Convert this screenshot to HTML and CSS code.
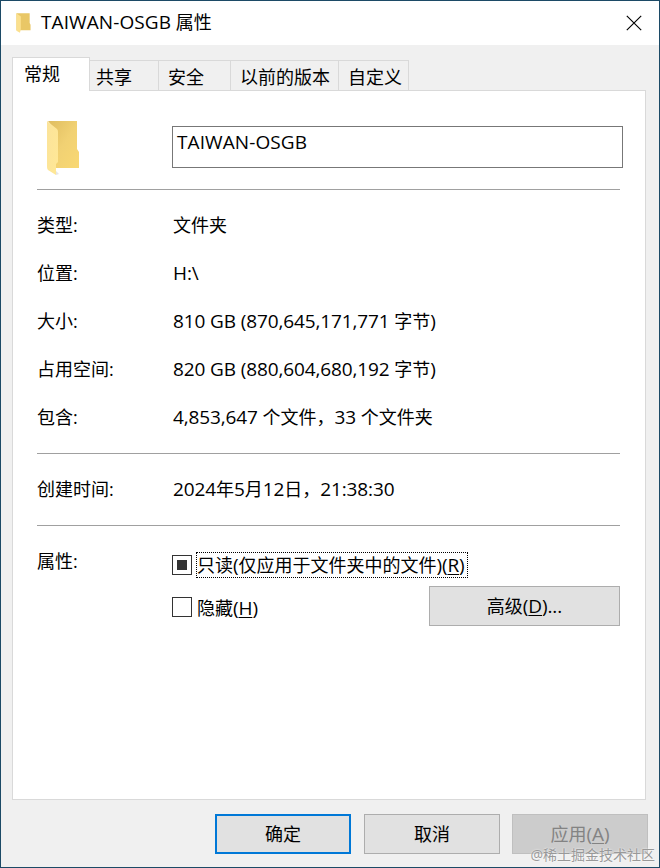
FILE: index.html
```html
<!DOCTYPE html>
<html lang="zh-CN">
<head>
<meta charset="utf-8">
<title>TAIWAN-OSGB 属性</title>
<link rel="stylesheet" href="styles.css">
</head>
<body>
<div class="window">
  <header class="titlebar">
    <svg class="title-icon" viewBox="0 0 34 56" preserveAspectRatio="none">
      <path fill="#e9c766" d="M1 1H31V28L33 33V48H1Z"/>
      <path fill="#fbe08e" d="M1 1L11 10V45L9 55L1 50Z"/>
    </svg>
    <h1 class="title"><span class="latin title-latin">TAIWAN-OSGB</span> 属性</h1>
    <svg class="close" viewBox="0 0 16 16"><path d="M.8 .8L15.2 15.2M15.2 .8L.8 15.2" stroke="#000" stroke-width="1.15"/></svg>
  </header>

  <nav class="tabs">
    <div class="tab active">常规</div>
    <div class="tab share">共享</div>
    <div class="tab security">安全</div>
    <div class="tab versions">以前的版本</div>
    <div class="tab custom">自定义</div>
  </nav>

  <main class="panel">
    <section class="head">
      <svg class="folder" viewBox="0 0 34 56">
        <defs>
          <linearGradient id="back" x1="0" y1="0" x2="1" y2="1">
            <stop offset="0" stop-color="#dfbd60"/><stop offset=".5" stop-color="#f1d173"/><stop offset="1" stop-color="#f9d873"/>
          </linearGradient>
          <linearGradient id="flap" x1="0" y1="0" x2="1" y2="1">
            <stop offset="0" stop-color="#fbe39a"/><stop offset="1" stop-color="#ffe896"/>
          </linearGradient>
        </defs>
        <path fill="url(#back)" d="M2 1H31V29L33 32V48H9V10Z"/>
        <path fill="#e6e6e6" d="M9 50L13 54L10 55Z"/>
        <path fill="url(#flap)" d="M1 1L11 9Q12 10 12 12V42L10 44V55L2 50Q1 49 1 47Z"/>
      </svg>
      <div class="name"><span class="latin title-latin">TAIWAN-OSGB</span></div>
    </section>

    <dl class="group">
      <dt>类型:</dt><dd>文件夹</dd>
      <dt>位置:</dt><dd><span class="latin">H:\</span></dd>
      <dt>大小:</dt><dd><span class="latin">810 GB (870,645,171,771</span> 字节<span class="latin">)</span></dd>
      <dt>占用空间:</dt><dd><span class="latin">820 GB (880,604,680,192</span> 字节<span class="latin">)</span></dd>
      <dt>包含:</dt><dd><span class="latin">4,853,647</span> 个文件，<span class="latin">33</span> 个文件夹</dd>
    </dl>

    <dl class="group">
      <dt>创建时间:</dt><dd><span class="latin">2024</span>年<span class="latin">5</span>月<span class="latin">12</span>日，<span class="latin">21:38:30</span></dd>
    </dl>

    <section class="attributes">
      <div class="attr-label">属性:</div>
      <div class="checks">
        <div class="check"><span class="box mixed"></span><span class="check-text focus">只读<span class="latin">(</span>仅应用于文件夹中的文件<span class="latin">)(<u>R</u>)</span></span></div>
        <div class="check hidden-row"><span class="box"></span><span class="check-text">隐藏<span class="latin">(<u>H</u>)</span></span>
          <div class="button advanced">高级<span class="latin">(<u>D</u>)...</span></div>
        </div>
      </div>
    </section>
  </main>

  <footer class="actions">
    <div class="button primary">确定</div>
    <div class="button cancel">取消</div>
    <div class="button disabled">应用<span class="latin">(<u>A</u>)</span></div>
  </footer>
  <div class="watermark">@稀土掘金技术社区</div>
</div>
</body>
</html>
```
FILE: styles.css
```css
* { box-sizing: border-box; }

body {
  margin: 0;
  font: 400 18px/24px "Open Sans", "Noto Sans CJK SC", sans-serif;
  color: #000;
}

.window {
  position: relative;
  width: 660px;
  height: 868px;
  border: 1px solid #1c4a66;
  background: #f0f0f0;
  overflow: hidden;
  display: flex;
  flex-direction: column;
}

.latin { font-size: 19px; line-height: 20px; letter-spacing: -0.12px; }
.title-latin { letter-spacing: 0.1px; }

u {
  text-decoration-thickness: 1px;
  text-underline-offset: 2px;
}

.titlebar {
  flex: none;
  display: flex;
  align-items: center;
  height: 44px;
  padding: 0 17px 0 15px;
  background: #fff;
}

.title-icon { width: 15px; height: 20px; margin-right: 10px; }
.title { flex: 1; margin: 0; padding-bottom: 2px; font-size: 18px; font-weight: inherit; }
.close { width: 16px; height: 16px; }

.tabs {
  flex: none;
  display: flex;
  align-items: flex-end;
  height: 45px;
  padding-left: 11px;
  position: relative;
  z-index: 1;
}

.tab {
  height: 30px;
  padding-top: 4px;
  border: 1px solid #d9d9d9;
  border-width: 1px 1px 0 0;
}

.active {
  width: 78px;
  height: 34px;
  margin-bottom: -1px;
  padding-left: 11px;
  border-left-width: 1px;
  background: #fff;
}

.share { width: 69px; padding-left: 6px; }
.security { width: 72px; padding-left: 9px; }
.versions { width: 108px; padding-left: 9px; }
.custom { width: 70px; padding-left: 9px; }

.panel {
  flex: none;
  width: 634px;
  height: 710px;
  margin-left: 11px;
  padding: 0 25px 0 24px;
  border: 1px solid #d9d9d9;
  background: #fff;
}

.head {
  display: flex;
  height: 99px;
  margin-right: -3px;
}

.folder { width: 34px; height: 56px; margin: 29px 0 0 9px; }

.name {
  width: 451px;
  height: 42px;
  margin: 35px 0 0 92px;
  padding: 3px 4px;
  border: 1px solid #777;
}

.group {
  display: grid;
  grid-template-columns: 136px 1fr;
  grid-auto-rows: 48px;
  align-items: center;
  margin: 0;
  padding: 11px 0 12px;
  border-top: 1px solid #a0a0a0;
  white-space: nowrap;
}

.head + .group { margin-top: -1px; }
dt, dd { margin: 0; }

.attributes {
  display: flex;
  border-top: 1px solid #a0a0a0;
}

.attr-label { width: 135px; padding-top: 23px; }
.checks { flex: 1; padding-top: 26px; }

.check {
  display: flex;
  align-items: center;
  height: 26px;
  white-space: nowrap;
}

.hidden-row { height: 40px; margin-top: 8px; }

.box {
  display: grid;
  place-items: center;
  width: 20px;
  height: 20px;
  margin-right: 4px;
  border: 1px solid #333;
}

.hidden-row .box { margin-top: 2px; }

.mixed::before {
  content: "";
  width: 10px;
  height: 10px;
  background: #333;
}

.check-text {
  height: 26px;
  border: 1px solid transparent;
}

.hidden-row .check-text { margin-top: 3px; }
.focus { width: 272px; border: 1px dotted #000; }

.button {
  display: flex;
  align-items: center;
  justify-content: center;
  width: 136px;
  height: 40px;
  border: 1px solid #adadad;
  background: #e1e1e1;
}

.advanced { width: 191px; margin-left: auto; }

.actions {
  display: flex;
  padding: 14px 0 0 214px;
}

.primary { border: 2px solid #0078d7; }
.cancel { margin: 0 12px 0 13px; }
.disabled { background: #ccc; border-color: #bfbfbf; color: #838383; }

.watermark {
  position: absolute;
  right: 4px;
  bottom: 1px;
  font-size: 14px;
  line-height: 22px;
  white-space: nowrap;
  color: #999;
  text-shadow: 0 0 2px #fff;
}
```
